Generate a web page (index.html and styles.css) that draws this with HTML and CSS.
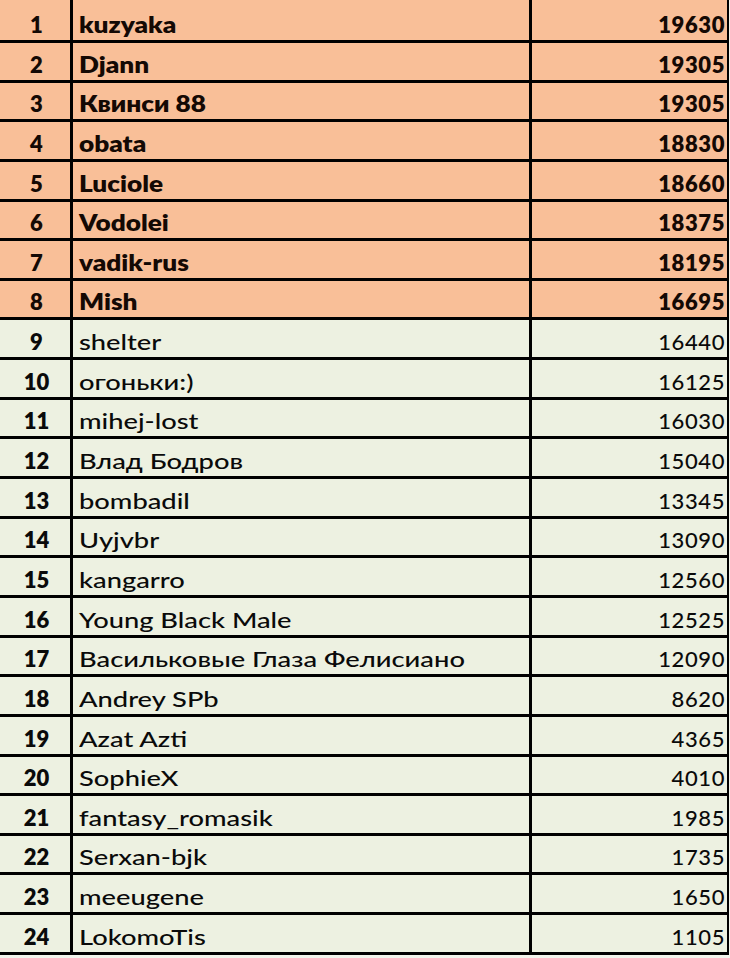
FILE: index.html
```html
<!DOCTYPE html>
<html lang="ru">
<head>
<meta charset="utf-8">
<title>Рейтинг</title>
<link rel="stylesheet" href="styles.css">
</head>
<body>
<div class="table">
  <div class="row top first"><div class="rank">1</div><div class="name"><span>kuzyaka</span></div><div class="score">19630</div></div>
  <div class="row top"><div class="rank">2</div><div class="name"><span>Djann</span></div><div class="score">19305</div></div>
  <div class="row top"><div class="rank">3</div><div class="name"><span>Квинси 88</span></div><div class="score">19305</div></div>
  <div class="row top"><div class="rank">4</div><div class="name"><span>obata</span></div><div class="score">18830</div></div>
  <div class="row top"><div class="rank">5</div><div class="name"><span>Luciole</span></div><div class="score">18660</div></div>
  <div class="row top"><div class="rank">6</div><div class="name"><span>Vodolei</span></div><div class="score">18375</div></div>
  <div class="row top"><div class="rank">7</div><div class="name"><span>vadik-rus</span></div><div class="score">18195</div></div>
  <div class="row top"><div class="rank">8</div><div class="name"><span>Mish</span></div><div class="score">16695</div></div>
  <div class="row"><div class="rank">9</div><div class="name"><span>shelter</span></div><div class="score">16440</div></div>
  <div class="row"><div class="rank">10</div><div class="name"><span>огоньки:)</span></div><div class="score">16125</div></div>
  <div class="row"><div class="rank">11</div><div class="name"><span>mihej-lost</span></div><div class="score">16030</div></div>
  <div class="row"><div class="rank">12</div><div class="name"><span>Влад Бодров</span></div><div class="score">15040</div></div>
  <div class="row"><div class="rank">13</div><div class="name"><span>bombadil</span></div><div class="score">13345</div></div>
  <div class="row"><div class="rank">14</div><div class="name"><span>Uyjvbr</span></div><div class="score">13090</div></div>
  <div class="row"><div class="rank">15</div><div class="name"><span>kangarro</span></div><div class="score">12560</div></div>
  <div class="row"><div class="rank">16</div><div class="name"><span>Young Black Male</span></div><div class="score">12525</div></div>
  <div class="row"><div class="rank">17</div><div class="name"><span>Васильковые Глаза Фелисиано</span></div><div class="score">12090</div></div>
  <div class="row"><div class="rank">18</div><div class="name"><span>Andrey SPb</span></div><div class="score">8620</div></div>
  <div class="row"><div class="rank">19</div><div class="name"><span>Azat Azti</span></div><div class="score">4365</div></div>
  <div class="row"><div class="rank">20</div><div class="name"><span>SophieX</span></div><div class="score">4010</div></div>
  <div class="row"><div class="rank">21</div><div class="name"><span>fantasy_romasik</span></div><div class="score">1985</div></div>
  <div class="row"><div class="rank">22</div><div class="name"><span>Serxan-bjk</span></div><div class="score">1735</div></div>
  <div class="row"><div class="rank">23</div><div class="name"><span>meeugene</span></div><div class="score">1650</div></div>
  <div class="row"><div class="rank">24</div><div class="name"><span>LokomoTis</span></div><div class="score">1105</div></div>
</div>
</body>
</html>
```
FILE: styles.css
```css
html, body {
  margin: 0;
  padding: 0;
  background: #f3f4ec;
}
body {
  width: 730px;
  height: 958px;
  overflow: hidden;
  font-family: Lato, "Liberation Sans", sans-serif;
  font-size: 22px;
  font-weight: 500;
  color: #0a0a0a;
}
.table {
  display: flex;
  flex-direction: column;
  width: 729px;
}
.row {
  display: grid;
  grid-template-columns: 73px 459px 197px;
  height: 39.65px;
  box-sizing: border-box;
  border-bottom: 3px solid #000;
  background: #edf1e1;
}
.row.first {
  height: 43px;
}
.row.top {
  background: #f9bf98;
  color: #140904;
}
.row > div {
  display: flex;
  align-items: flex-end;
  line-height: 1;
  padding-bottom: 4px;
  box-sizing: border-box;
  border-right: 3px solid #000;
  white-space: nowrap;
}
.rank {
  justify-content: center;
  font-weight: 800;
  padding-left: 3px;
}
.name {
  padding-left: 6px;
}
.name span {
  display: inline-block;
  transform: scaleX(1.24);
  transform-origin: left bottom;
}
.top .name {
  font-weight: 800;
}
.top .name span {
  transform: scaleX(1.19);
}
.score {
  justify-content: flex-end;
  padding-right: 2px;
  letter-spacing: 0.6px;
}
.top .score {
  font-weight: 800;
}
.row > .score {
  border-right-width: 2px;
}
```
